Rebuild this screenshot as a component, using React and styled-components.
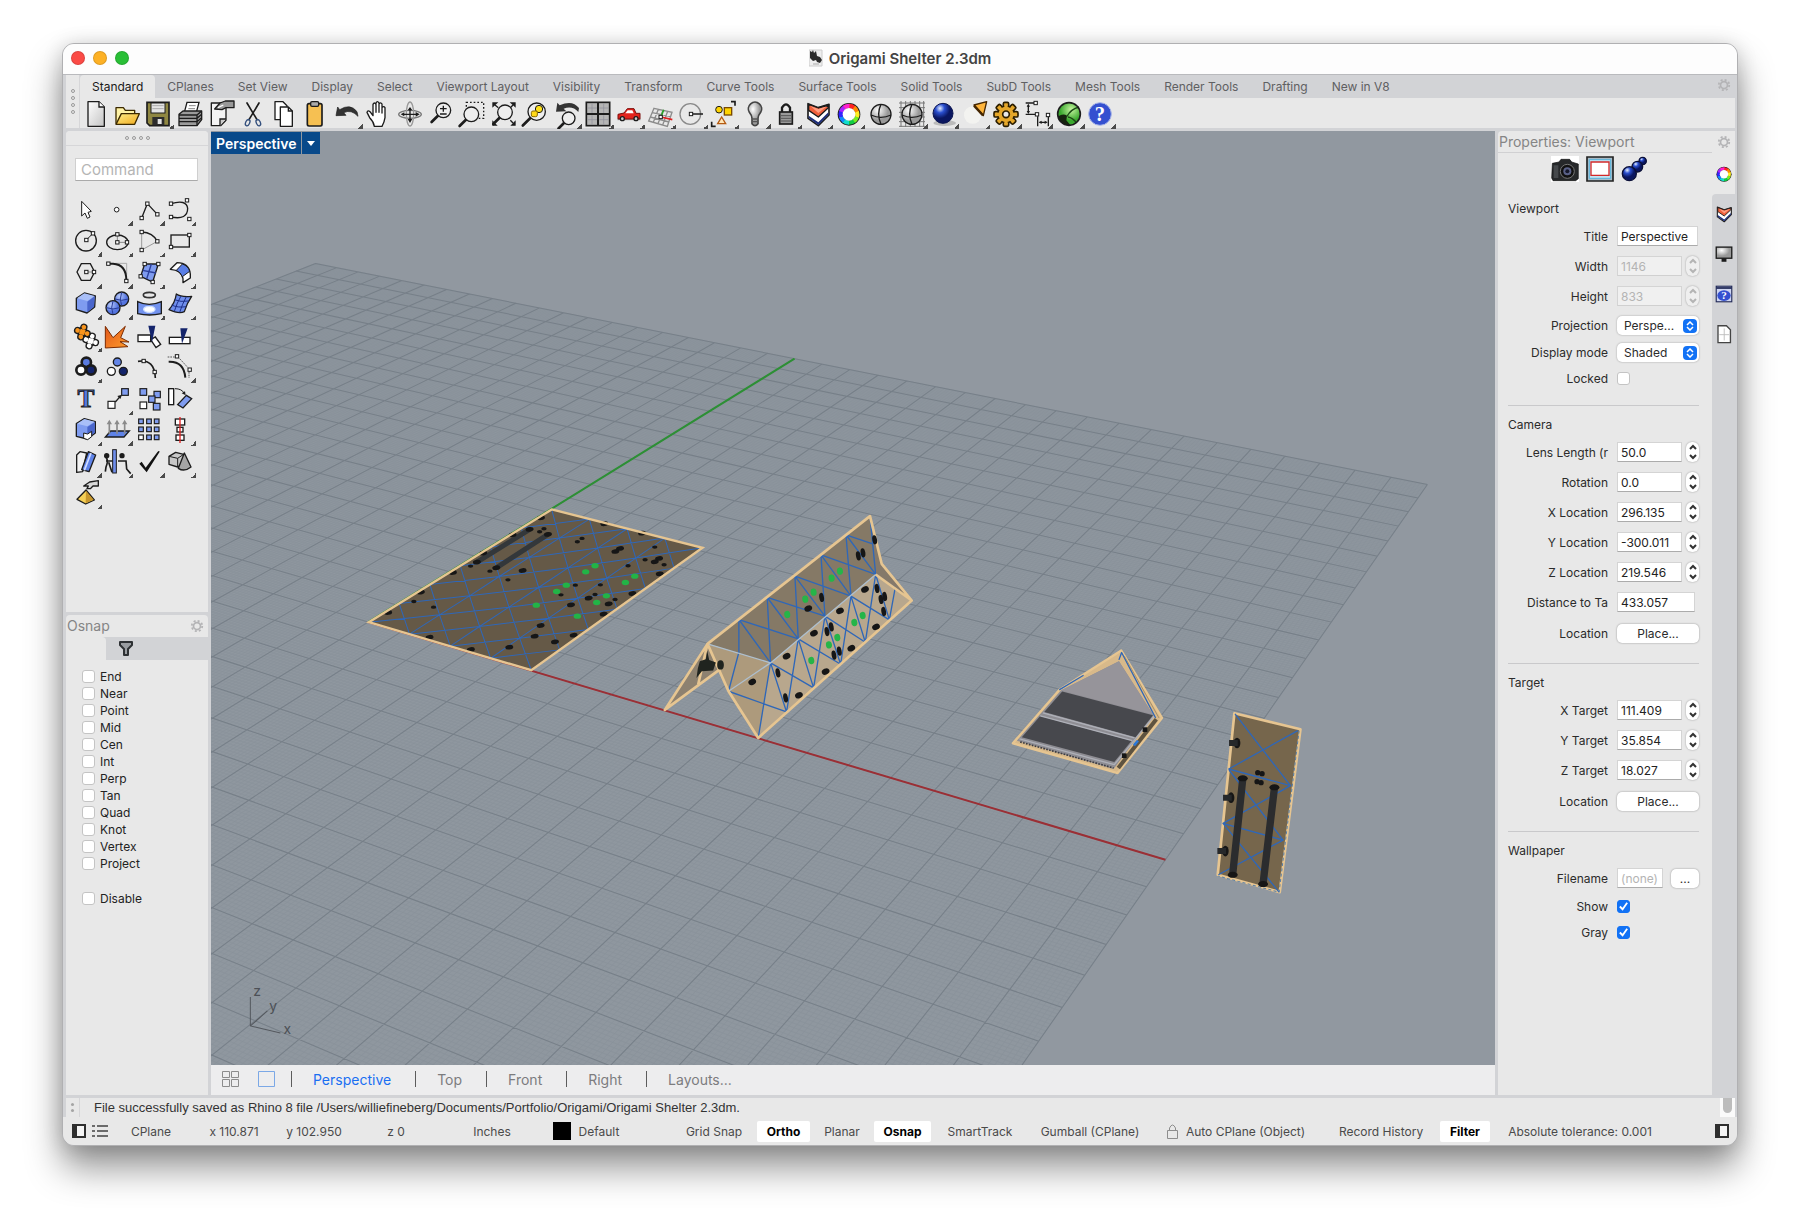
import { useId } from "react";
// Styles
import styled, { createGlobalStyle } from "styled-components";

// Constants
const BLUE = "#7f9cf0";
const NAVY = "#14246b";
const CREASE = "#2f67b8";
const INK = "#1c1c1c";

const TABS = [
  "Standard",
  "CPlanes",
  "Set View",
  "Display",
  "Select",
  "Viewport Layout",
  "Visibility",
  "Transform",
  "Curve Tools",
  "Surface Tools",
  "Solid Tools",
  "SubD Tools",
  "Mesh Tools",
  "Render Tools",
  "Drafting",
  "New in V8",
];

const OSNAPS = [
  "End",
  "Near",
  "Point",
  "Mid",
  "Cen",
  "Int",
  "Perp",
  "Tan",
  "Quad",
  "Knot",
  "Vertex",
  "Project",
];

const VIEW_TABS = ["Perspective", "Top", "Front", "Right", "Layouts..."];

/* ---------- icon parts, all drawn on a 90 x 90 canvas ---------- */

const Node = ({ x, y }) => (
  <rect x={x - 5} y={y - 5} width='10' height='10' fill='#fff' stroke={INK} strokeWidth='3' />
);

const Box = ({ x, y, s = 17, fill = BLUE }) => (
  <rect x={x} y={y} width={s} height={s} fill={fill} stroke={INK} strokeWidth='3.5' />
);

const Ball = ({ x, y, r, fill, w = 4 }) => (
  <circle cx={x} cy={y} r={r} fill={fill} stroke={INK} strokeWidth={w} />
);

const Sheet = ({ d = "M21 8h33l16 16v58H21Z", fill = "#f4f4f4" }) => (
  <path d={d} fill={fill} stroke={INK} strokeWidth='4' strokeLinejoin='round' />
);

const Lens = ({ x = 52, y = 40, r = 22, fill = "#eee" }) => (
  <>
    <path d={`M${x - r * 0.7} ${y + r * 0.7}L${x - r * 1.6} ${y + r * 1.6}`} stroke={INK} strokeWidth='8' strokeLinecap='round' />
    <circle cx={x} cy={y} r={r} fill={fill} stroke={INK} strokeWidth='4' />
  </>
);

const Layers = () => (
  <>
    <path d='M15 14L46 26 78 16V48L46 80 15 58Z' fill='#fff' stroke={INK} strokeWidth='5' strokeLinejoin='round' />
    <path d='M17 50L46 70 76 40V48L46 78 17 57Z' fill='#1d2d78' />
    <path d='M17 16L46 27 76 18V26L46 54 17 34Z' fill='#f0603c' stroke={INK} strokeWidth='4' strokeLinejoin='round' />
    <path d='M22 21l24 9 26-8-26 20Z' fill='#ff9d80' />
  </>
);

const JigsawPiece = ({ x, y, fill }) =>
  [11, 7].map((r) => (
    <g key={r} fill={r === 11 ? INK : fill} transform={`rotate(18 ${x} ${y})`}>
      <circle cx={x - 15} cy={y} r={r} />
      <circle cx={x + 15} cy={y} r={r} />
      <circle cx={x} cy={y - 15} r={r} />
      <circle cx={x} cy={y + 15} r={r} />
      <rect x={x - r - 1} y={y - r - 1} width={r * 2 + 2} height={r * 2 + 2} />
    </g>
  ));

const wheel = ["#f22", "#f80", "#fe2", "#7e2", "#1c4", "#1dc", "#18f", "#32f", "#a2f", "#f2c"];

const ColorWheel = () => (
  <>
    <circle cx='45' cy='46' r='34' fill={INK} />
    {wheel.map((color, i) => (
      <circle
        key={color}
        cx='45'
        cy='46'
        r='25'
        fill='none'
        stroke={color}
        strokeWidth='13'
        strokeDasharray='17 141'
        transform={`rotate(${i * 36 - 90} 45 46)`}
      />
    ))}
    <circle cx='45' cy='46' r='19' fill='#fff' />
  </>
);

const Cog = ({ fill, line }) => (
  <>
    {[0, 45, 90, 135, 180, 225, 270, 315].map((a) => (
      <rect key={a} x='37' y='10' width='16' height='22' rx='4' fill={fill} stroke={line} strokeWidth='5' transform={`rotate(${a} 45 46)`} />
    ))}
    <circle cx='45' cy='46' r='25' fill={fill} stroke={line} strokeWidth='4' />
    {[0, 45, 90, 135, 180, 225, 270, 315].map((a) => (
      <rect key={a} x='40' y='17' width='10' height='12' fill={fill} transform={`rotate(${a} 45 46)`} />
    ))}
    <circle cx='45' cy='46' r='10' fill='#e8e8e8' stroke={line} strokeWidth='5' />
  </>
);

const WireSphere = () => (
  <>
    <circle cx='45' cy='46' r='30' fill='url(#gray)' stroke={INK} strokeWidth='4' />
    <path d='M45 16q-14 28 0 60M15 48q30 14 60 0' fill='none' stroke={INK} strokeWidth='4' />
  </>
);

const TOOLBAR = [
  { name: "New", art: <><Sheet fill='url(#page)' /><path d='M54 8v16h16' fill='#fff' stroke={INK} strokeWidth='4' /></> },
  {
    name: "Open",
    art: (
      <>
        <path d='M12 74V26h22l6 8h28v12' fill='#fff3a6' stroke='#3c2a00' strokeWidth='4' strokeLinejoin='round' />
        <path d='M12 76l16-32h54L68 76Z' fill='url(#gold)' stroke='#3c2a00' strokeWidth='4' strokeLinejoin='round' />
      </>
    ),
  },
  {
    name: "Save",
    menu: true,
    art: (
      <>
        <path d='M12 10h66v70H20l-8-8Z' fill='#8f8742' stroke={INK} strokeWidth='5' />
        <rect x='24' y='12' width='42' height='30' fill='#e4e4e4' stroke={INK} strokeWidth='3' />
        <path d='M28 20h34M28 29h34' stroke='#aaa' strokeWidth='3' />
        <rect x='28' y='54' width='36' height='25' fill='#2c2c2c' />
        <rect x='44' y='60' width='12' height='15' fill='#e6e6e6' />
      </>
    ),
  },
  {
    name: "Print",
    art: (
      <>
        <path d='M28 40L36 10h36l-8 30Z' fill='#fff' stroke={INK} strokeWidth='4' />
        <path d='M42 20h20M40 29h20' stroke='#888' strokeWidth='3' />
        <path d='M12 46l12-10h56v26L66 80H12Z' fill='#9b9b9b' stroke={INK} strokeWidth='4' strokeLinejoin='round' />
        <path d='M12 48h54v32M66 48l14-12M12 58h54l14-12M12 68h54l14-12' fill='none' stroke={INK} strokeWidth='4' />
      </>
    ),
  },
  {
    name: "Document Properties",
    art: (
      <>
        <Sheet d='M16 12h44v52L44 80H16Z' />
        <path d='M60 60H42v20' fill='#ccc' stroke={INK} strokeWidth='4' />
        <path d='M26 30l16-18 16-6h26v20H60l-12 6Z' fill='#999' stroke={INK} strokeWidth='4' strokeLinejoin='round' />
        <path d='M36 26l16-8' stroke='#fff' strokeWidth='4' />
      </>
    ),
  },
  {
    name: "Cut",
    art: (
      <>
        <path d='M27 12l30 50M63 12L33 62' stroke={INK} strokeWidth='5' strokeLinecap='round' />
        <ellipse cx='29' cy='71' rx='6' ry='10' transform='rotate(25 29 71)' fill='none' stroke='#34507e' strokeWidth='4' />
        <ellipse cx='61' cy='71' rx='6' ry='10' transform='rotate(-25 61 71)' fill='none' stroke='#34507e' strokeWidth='4' />
      </>
    ),
  },
  {
    name: "Copy",
    art: (
      <>
        <Sheet d='M18 8h24l12 12v42H18Z' fill='#fff' />
        <Sheet d='M34 24h24l12 12v46H34Z' fill='#fff' />
        <path d='M58 24v12h12' fill='none' stroke={INK} strokeWidth='4' />
      </>
    ),
  },
  {
    name: "Paste",
    art: (
      <>
        <rect x='22' y='14' width='44' height='67' rx='5' fill='#f6c052' stroke={INK} strokeWidth='5' />
        <rect x='32' y='8' width='24' height='14' rx='4' fill='#aaa' stroke={INK} strokeWidth='4' />
      </>
    ),
  },
  { name: "Undo", menu: true, art: <path d='M12 50l5-26 6 8q32-20 52 6l3 14q-20-22-43-11l7 8Z' fill='#333' stroke={INK} strokeWidth='2' /> },
  {
    name: "Pan",
    art: (
      <path
        d='M34 82q-2-14-14-26L12 40q2-8 9-2l9 12V16q4-8 9 0v24-28q4-8 9 0v28-25q5-7 9 0v27-16q5-6 9 0v30q-2 14-9 26Z'
        fill='#fff'
        stroke={INK}
        strokeWidth='4'
        strokeLinejoin='round'
      />
    ),
  },
  {
    name: "Rotate View",
    art: (
      <>
        <ellipse cx='45' cy='46' rx='34' ry='12' fill='none' stroke='#777' strokeWidth='4' />
        <ellipse cx='45' cy='45' rx='11' ry='36' fill='none' stroke='#999' strokeWidth='4' />
        <path d='M45 28v34M24 46h40' stroke={INK} strokeWidth='4' />
        <path d='M45 24l7 10H38ZM45 72l7-12H38ZM74 46L62 39v14ZM17 46l11-6v12Z' fill={INK} />
      </>
    ),
  },
  { name: "Zoom", art: <><Lens y={34} /><path d='M42 29h20M52 20v18M42 45h20' stroke={INK} strokeWidth='4' /></> },
  {
    name: "Zoom Window",
    art: (
      <>
        <rect x='28' y='10' width='52' height='48' fill='none' stroke={INK} strokeWidth='4' strokeDasharray='5 6' />
        <Lens x={43} y={46} />
      </>
    ),
  },
  {
    name: "Zoom Extents",
    art: (
      <>
        <path d='M10 10h18L10 26ZM80 10v16L62 10ZM80 80H64l16-16ZM10 80V64l16 16Z' fill={INK} />
        <path d='M18 18l10 8M72 18l-8 8M72 72l-8-8' stroke={INK} strokeWidth='4' />
        <Lens x={48} y={40} />
      </>
    ),
  },
  {
    name: "Zoom Selected",
    art: (
      <>
        <Lens x={50} y={38} r={26} />
        <Ball x={57} y={30} r={11} fill='#ffe11a' w={3} />
        <rect x='34' y='36' width='18' height='17' rx='5' fill='#ffd91a' stroke='#8a6a00' strokeWidth='3' />
      </>
    ),
  },
  {
    name: "Undo View",
    menu: true,
    art: (
      <>
        <Lens x={50} y={58} r={19} />
        <path d='M12 38l4-27 7 8q38-18 58 8l-2 12q-18-20-44-10l8 8Z' fill='#333' />
      </>
    ),
  },
  {
    name: "4 Viewports",
    menu: true,
    art: (
      <>
        <rect x='10' y='10' width='70' height='70' fill='#b5b5b5' stroke={INK} strokeWidth='5' />
        <path d='M45 10v70M10 45h70' stroke={INK} strokeWidth='6' />
        <path d='M27 14v28M14 27h28M62 14v28M49 27h28M27 49v28M14 62h28M62 49v28M49 62h28' stroke='#8e8e9a' strokeWidth='2' />
      </>
    ),
  },
  {
    name: "Named Views",
    menu: true,
    art: (
      <>
        <path d='M10 62h70' stroke='#999' strokeWidth='3' />
        <path d='M12 46l18-4 10-13h20l6 14h12v17H12Z' fill='#e2231c' stroke='#7d0d0a' strokeWidth='3' strokeLinejoin='round' />
        <path d='M41 34h14l4 9H34Z' fill='#fff' />
        <Ball x={25} y={59} r={6} fill='#ccc' />
        <Ball x={66} y={59} r={6} fill='#ccc' />
      </>
    ),
  },
  {
    name: "Set CPlane",
    menu: true,
    art: (
      <>
        <path d='M24 28l54 12-14 42L8 66ZM37 31L22 70M51 34L36 74M65 37L50 78M19 41l55 12M13 54l56 15' fill='none' stroke='#8c8c8c' strokeWidth='4' />
        <path d='M45 54l34 8' stroke='#e02020' strokeWidth='5' />
        <path d='M45 54l8-22' stroke='#27a327' strokeWidth='5' />
        <Node x={44} y={54} />
      </>
    ),
  },
  {
    name: "Object Snap",
    menu: true,
    art: (
      <>
        <circle cx='40' cy='45' r='31' fill='none' stroke='#8a8a8a' strokeWidth='4' />
        <path d='M42 45h36' stroke={INK} strokeWidth='4' />
        <Node x={42} y={45} />
      </>
    ),
  },
  {
    name: "Select Objects",
    menu: true,
    art: (
      <>
        <Ball x={30} y={32} r={10} fill='#ffd400' w={3} />
        <rect x='46' y='26' width='22' height='22' fill='#ffd400' stroke='#7a4a00' strokeWidth='4' />
        <path d='M38 54l12 20H26Z' fill='#ffe6b8' stroke='#b55a10' strokeWidth='4' />
        <path d='M66 8h12v12M8 68v14h12' fill='none' stroke={INK} strokeWidth='5' />
      </>
    ),
  },
  {
    name: "Hide Objects",
    menu: true,
    art: (
      <>
        <path d='M36 58q0-8-8-18a20 20 0 1 1 34 0q-8 10-8 18v16q-9 12-18 0Z' fill='url(#gray)' stroke='#444' strokeWidth='5' />
        <path d='M37 60h16M37 68h16' stroke='#555' strokeWidth='4' />
      </>
    ),
  },
  {
    name: "Lock Objects",
    menu: true,
    art: (
      <>
        <path d='M33 40V26q12-20 24 0v14' fill='none' stroke={INK} strokeWidth='7' />
        <rect x='26' y='39' width='38' height='36' fill='#999' stroke={INK} strokeWidth='5' />
        <path d='M30 50h30M30 58h30M30 66h30' stroke='#555' strokeWidth='3' />
      </>
    ),
  },
  { name: "Edit Layers", menu: true, art: <Layers /> },
  { name: "Properties", menu: true, art: <ColorWheel /> },
  { name: "Wireframe", art: <WireSphere /> },
  {
    name: "Shade",
    menu: true,
    art: (
      <>
        <path d='M12 6v78M26 6v78M40 6v78M54 6v78M68 6v78M80 6v78M6 12h78M6 26h78M6 40h78M6 54h78M6 68h78M6 82h78' stroke='#777' strokeWidth='3' />
        <WireSphere />
      </>
    ),
  },
  {
    name: "Render",
    menu: true,
    art: (
      <>
        <ellipse cx='50' cy='72' rx='34' ry='9' fill='#bbb' />
        <circle cx='45' cy='43' r='30' fill='url(#blue)' stroke='#0b1550' strokeWidth='3' />
      </>
    ),
  },
  {
    name: "Spotlight",
    menu: true,
    art: (
      <>
        <ellipse cx='38' cy='48' rx='26' ry='26' fill='#f8f8f4' opacity='.7' />
        <path d='M42 18L80 8 70 50Z' fill='#ffb53c' stroke='#452600' strokeWidth='4' strokeLinejoin='round' />
        <path d='M42 20l27 29' stroke='#452600' strokeWidth='7' />
      </>
    ),
  },
  { name: "Options", menu: true, art: <Cog fill='#e5a72b' line='#2c1e00' /> },
  {
    name: "Dimensions",
    menu: true,
    art: (
      <>
        <path d='M8 12h30M8 46h30M16 18v22M44 52v30M76 48v34M50 70h20' stroke={INK} strokeWidth='4' fill='none' />
        <path d='M16 14l5 9H11ZM16 45l5-9H11ZM47 70l9-5v10ZM74 70l-9-5v10Z' fill={INK} />
        <Node x={38} y={12} />
        <Node x={42} y={46} />
        <Node x={75} y={48} />
      </>
    ),
  },
  {
    name: "Grasshopper",
    menu: true,
    art: (
      <>
        <circle cx='45' cy='45' r='33' fill='url(#green)' />
        <path d='M13 52q14-10 26-2l-2 14 12 14q-14 4-26-6-8-8-10-20Z' fill='#16240f' />
        <path d='M39 52q12-22 36-28M42 54q14 2 26 18' fill='none' stroke='#1c4a16' strokeWidth='4' />
        <circle cx='45' cy='45' r='34' fill='none' stroke={INK} strokeWidth='5' />
      </>
    ),
  },
  {
    name: "Help",
    menu: true,
    art: (
      <>
        <circle cx='45' cy='45' r='34' fill='#3450d0' stroke='#a9b6e8' strokeWidth='3' />
        <text x='45' y='66' fontSize='62' fontWeight='700' fontFamily='Liberation Serif, serif' textAnchor='middle' fill='#fff'>
          ?
        </text>
      </>
    ),
  },
];

const TOOLS = [
  { name: "Select", art: <path d='M32 19v44l10-9 7 16 8-4-6-14 10-3Z' fill='#fff' stroke={INK} strokeWidth='3' strokeLinejoin='round' /> },
  { name: "Point", menu: true, art: <Ball x={44} y={44} r={7} fill='#fff' w={3} /> },
  {
    name: "Polyline",
    menu: true,
    art: <><path d='M23 69L40 26l30 32' fill='none' stroke={INK} strokeWidth='4' /><Node x={23} y={69} /><Node x={40} y={26} /><Node x={70} y={58} /></>,
  },
  {
    name: "Curve",
    menu: true,
    art: (
      <>
        <path d='M18 26q46-14 50 14 0 36-50 26' fill='none' stroke={INK} strokeWidth='4' />
        <Node x={18} y={26} /><Node x={66} y={16} /><Node x={18} y={66} /><Node x={73} y={72} />
      </>
    ),
  },
  {
    name: "Circle",
    menu: true,
    art: <><circle cx='45' cy='44' r='31' fill='none' stroke={INK} strokeWidth='4' /><path d='M46 42l20-20' stroke={INK} strokeWidth='3' /><Node x={46} y={42} /><Node x={66} y={22} /></>,
  },
  {
    name: "Ellipse",
    menu: true,
    art: (
      <>
        <ellipse cx='46' cy='49' rx='32' ry='22' fill='none' stroke={INK} strokeWidth='4' />
        <path d='M46 25v24h29' fill='none' stroke='#888' strokeWidth='3' />
        <Node x={46} y={25} /><Node x={46} y={49} /><Node x={75} y={49} />
      </>
    ),
  },
  {
    name: "Arc",
    menu: true,
    art: (
      <>
        <path d='M70 46L23 72V18' fill='none' stroke='#999' strokeWidth='3' />
        <path d='M23 18q34 2 47 28' fill='none' stroke={INK} strokeWidth='4' />
        <Node x={23} y={18} /><Node x={70} y={46} /><Node x={23} y={72} />
      </>
    ),
  },
  { name: "Rectangle", menu: true, art: <><rect x='18' y='27' width='55' height='36' fill='none' stroke={INK} strokeWidth='4' /><Node x={18} y={63} /><Node x={73} y={27} /></> },
  { name: "Polygon", menu: true, art: <><path d='M18 42l13-25h27l13 25-13 25H31Z' fill='none' stroke={INK} strokeWidth='4' /><path d='M46 42h23' stroke='#888' strokeWidth='3' /><Node x={46} y={42} /><Node x={69} y={42} /></> },
  {
    name: "Fillet",
    menu: true,
    art: (
      <>
        <path d='M40 16h34v34' fill='none' stroke='#aaa' strokeWidth='3' />
        <path d='M19 17h14q40 2 40 50' fill='none' stroke={INK} strokeWidth='6' />
        <Node x={19} y={17} /><Node x={73} y={69} />
      </>
    ),
  },
  {
    name: "Surface",
    menu: true,
    art: (
      <>
        <path d='M32 18h41L56 72 20 55Z' fill={BLUE} stroke={INK} strokeWidth='4' />
        <path d='M52 18L38 63M26 37l40 8' stroke='#2b3f9c' strokeWidth='4' />
        <Node x={32} y={18} /><Node x={73} y={18} /><Node x={20} y={55} /><Node x={56} y={72} />
      </>
    ),
  },
  {
    name: "Sweep",
    menu: true,
    art: (
      <>
        <path d='M16 34l20-20q36 0 40 34v12L54 74V62Q50 36 16 34Z' fill='#fff' stroke={INK} strokeWidth='4' strokeLinejoin='round' />
        <path d='M34 37l18-19q18 6 22 22L52 56Q46 42 34 37Z' fill='#5b7fe6' stroke={INK} strokeWidth='3' />
      </>
    ),
  },
  {
    name: "Box",
    menu: true,
    art: (
      <>
        <path d='M16 28l24-16 33 9-2 33-23 18-32-10Z' fill={BLUE} stroke={INK} strokeWidth='4' strokeLinejoin='round' />
        <path d='M18 28l31 8 22-15-31-8Z' fill='#a9bff8' />
        <path d='M49 38v32l20-17 2-31Z' fill='#4a66cc' />
      </>
    ),
  },
  {
    name: "Boolean",
    menu: true,
    art: (
      <>
        <Ball x={59} y={30} r={21} fill='url(#sky)' />
        <path d='M59 10q-8 20 0 40M39 30q20 8 40 0' fill='none' stroke='#2a3e98' strokeWidth='3' />
        <Ball x={33} y={56} r={21} fill='url(#sky)' />
        <path d='M33 36q-8 20 0 40M13 56q20 8 40 0' fill='none' stroke='#2a3e98' strokeWidth='3' />
      </>
    ),
  },
  {
    name: "Project",
    menu: true,
    art: (
      <>
        <ellipse cx='46' cy='18' rx='18' ry='8' fill='none' stroke='#333' strokeWidth='5' />
        <path d='M11 38q34 16 71 0v36q-36 8-71 0Z' fill='#7292ee' stroke={INK} strokeWidth='4' />
        <ellipse cx='46' cy='61' rx='17' ry='9' fill='#fff' stroke='#cfe0ff' strokeWidth='4' />
      </>
    ),
  },
  {
    name: "Patch",
    menu: true,
    art: (
      <>
        <path d='M34 15q14 10 46 7-14 20-22 46-16 8-46-6 18-20 22-47Z' fill='#6f8eec' stroke={INK} strokeWidth='4' strokeLinejoin='round' />
        <path d='M28 32q18 8 44 4M20 48q18 9 44 5M48 21q-12 20-20 46M64 23q-12 22-20 47' fill='none' stroke='#1d2f8a' strokeWidth='3' />
      </>
    ),
  },
  {
    name: "Join",
    menu: true,
    art: (
      <>
        <JigsawPiece x={59} y={60} fill='#fff' />
        <JigsawPiece x={34} y={33} fill='#f7941d' />
      </>
    ),
  },
  { name: "Explode", art: <path d='M10 16l23 34 37-34-14 34 25 13-27-1 24 15-68 4Z' fill='url(#fire)' stroke='#7a2a00' strokeWidth='3' strokeLinejoin='round' /> },
  {
    name: "Trim",
    art: (
      <>
        <path d='M12 42h38v20H12ZM50 56l14-8 16 22-14 10Z' fill='#fff' stroke={INK} strokeWidth='4' />
        <path d='M43 14h21L54 64Z' fill={NAVY} />
      </>
    ),
  },
  { name: "Split", art: <><rect x='13' y='49' width='62' height='19' fill='#fff' stroke={INK} strokeWidth='4' /><path d='M46 22h22L51 68Z' fill={NAVY} /></> },
  {
    name: "Group",
    menu: true,
    art: (
      <g stroke={INK} strokeWidth='8'>
        <circle cx='46' cy='31' r='14' fill='#5a7be0' />
        <circle cx='60' cy='54' r='14' fill={NAVY} />
        <circle cx='30' cy='54' r='14' fill='#fff' />
      </g>
    ),
  },
  { name: "Ungroup", art: <><Ball x={46} y={30} r={12} fill='#6385e6' /><Ball x={28} y={58} r={12} fill='#fff' /><Ball x={64} y={58} r={12} fill={NAVY} /></> },
  { name: "Edit Points", art: <><path d='M12 28q50-8 52 50' fill='none' stroke={INK} strokeWidth='5' /><Node x={29} y={27} /><Node x={62} y={60} /></> },
  {
    name: "Control Points",
    menu: true,
    art: (
      <>
        <path d='M8 15h24M44 20l24 26M72 60v18' fill='none' stroke='#555' strokeWidth='3' strokeDasharray='5 3' />
        <path d='M11 29q46-2 50 48' fill='none' stroke={INK} strokeWidth='6' />
        <Node x={36} y={13} /><Node x={74} y={53} />
      </>
    ),
  },
  {
    name: "Text",
    art: (
      <text x='45' y='70' fontSize='76' fontWeight='700' fontFamily='Liberation Serif, serif' textAnchor='middle' fill='#5579dd' stroke={INK} strokeWidth='3'>
        T
      </text>
    ),
  },
  { name: "Move", menu: true, art: <><path d='M40 54l14-16' stroke={INK} strokeWidth='4' /><path d='M60 32l-14 4 9 9Z' fill={INK} /><Box x={18} y={52} s={21} fill='#fff' /><Box x={59} y={14} s={20} /></> },
  { name: "Copy Objects", art: <><Box x={18} y={14} s={20} /><Box x={18} y={54} s={20} fill='#fff' /><Box x={60} y={22} s={19} /><Box x={44} y={36} s={19} /><Box x={58} y={58} s={20} /></> },
  {
    name: "Rotate",
    art: (
      <>
        <rect x='11' y='14' width='15' height='48' fill='#fff' stroke={INK} strokeWidth='4' />
        <path d='M30 14q20 0 28 14' fill='none' stroke={INK} strokeWidth='3' />
        <path d='M62 34l-12-6 10-6Z' fill={INK} />
        <path d='M64 34l16 10-26 28-16-10Z' fill={BLUE} stroke={INK} strokeWidth='4' />
      </>
    ),
  },
  {
    name: "Solid Edit",
    menu: true,
    art: (
      <>
        <path d='M16 26l24-15 33 9v34L49 72l-33-8Z' fill={BLUE} stroke={INK} strokeWidth='4' strokeLinejoin='round' />
        <path d='M18 26l31 8 22-14-31-8Z' fill='#a9bff8' />
        <path d='M49 36v34l22-17V22Z' fill='#4a66cc' />
        <path d='M38 54l12 3 12-8v16L50 74l-12-4Z' fill='#fff' stroke={INK} strokeWidth='3' />
      </>
    ),
  },
  {
    name: "Extrude",
    menu: true,
    art: (
      <>
        <path d='M26 48h56L66 66H10Z' fill='#5f83e8' stroke={INK} strokeWidth='4' />
        <path d='M22 56V26M45 56V26M68 56V26' stroke='#8a8a8a' strokeWidth='5' />
        <path d='M22 14l8 14H14ZM45 14l8 14H37ZM68 14l8 14H60Z' fill='#8a8a8a' />
      </>
    ),
  },
  {
    name: "Array",
    art: [12, 36, 60].map((y) => [14, 38, 61].map((x) => <Box key={`${x}-${y}`} x={x} y={y} s={14} fill={x === 14 && y === 60 ? "#fff" : BLUE} />)),
  },
  {
    name: "Align",
    menu: true,
    art: (
      <>
        <rect x='31' y='12' width='28' height='18' fill='#fff' stroke={INK} strokeWidth='4' />
        <rect x='36' y='37' width='18' height='14' fill='#fff' stroke={INK} strokeWidth='4' />
        <rect x='33' y='60' width='24' height='16' fill='#fff' stroke={INK} strokeWidth='4' />
        <path d='M45 6v78' stroke='#e02020' strokeWidth='4' />
      </>
    ),
  },
  {
    name: "Unroll",
    menu: true,
    art: (
      <>
        <path d='M17 24l10-10 20 4-12 56-18 2Z' fill='#f2f2f2' stroke={INK} strokeWidth='4' strokeLinejoin='round' />
        <path d='M52 14l22 10-20 50-22-6Z' fill='#5f83e8' stroke={INK} strokeWidth='4' strokeLinejoin='round' />
        <path d='M60 18l-20 52' stroke='#cfdcff' strokeWidth='5' />
      </>
    ),
  },
  {
    name: "Flow",
    menu: true,
    art: (
      <>
        <path d='M12 30q8 12 0 30l-2 14M12 42h28M48 42h24l2 24 12 14M20 46l10 30' fill='none' stroke={INK} strokeWidth='5' />
        <circle cx='14' cy='26' r='8' fill={INK} />
        <circle cx='60' cy='26' r='8' fill={INK} />
        <rect x='32' y='8' width='11' height='70' fill='#6f8eec' stroke={INK} strokeWidth='3' />
      </>
    ),
  },
  { name: "Check", menu: true, art: <path d='M16 50l7-6 12 18 36-48q4-4 6 0L38 76Z' fill='#111' /> },
  {
    name: "Primitives",
    menu: true,
    art: (
      <>
        <path d='M12 28l20-12 24 6v26L38 60 12 52Z' fill='#c8c8c8' stroke={INK} strokeWidth='4' strokeLinejoin='round' />
        <path d='M12 28l26 6 18-12M38 34v26' fill='none' stroke={INK} strokeWidth='3' />
        <path d='M58 18L40 64q18 12 38-4Z' fill='#a5a5a5' stroke={INK} strokeWidth='4' strokeLinejoin='round' />
      </>
    ),
  },
  {
    name: "Pyramid",
    menu: true,
    art: (
      <>
        <path d='M38 24l18-12 26-4v16H66l-8 8H48l4-8Z' fill='#d8d8d8' stroke={INK} strokeWidth='4' strokeLinejoin='round' />
        <path d='M45 36L18 64l26 14 26-12Z' fill='#f5cf55' stroke={INK} strokeWidth='4' strokeLinejoin='round' />
        <path d='M45 38l-1 38 24-11Z' fill='#c7962c' />
      </>
    ),
  },
];

const SIDE_TABS = [
  { name: "Layers", art: <Layers /> },
  {
    name: "Display",
    art: (
      <>
        <rect x='10' y='14' width='70' height='50' fill='url(#gray)' stroke={INK} strokeWidth='6' />
        <path d='M34 64h22v16H34Z' fill={INK} />
      </>
    ),
  },
  {
    name: "Help",
    art: (
      <>
        <rect x='10' y='10' width='70' height='70' fill='#cfd6f2' stroke='#222a58' strokeWidth='5' />
        <path d='M10 14h70v8H10Z' fill='#222a58' />
        <ellipse cx='45' cy='52' rx='30' ry='24' fill='#3450d0' />
        <text x='45' y='69' fontSize='50' fontWeight='700' fontFamily='Liberation Serif, serif' textAnchor='middle' fill='#fff'>
          ?
        </text>
      </>
    ),
  },
  { name: "Page", art: <><path d='M18 8h38l18 18v58H18Z' fill='#fff' stroke='#444' strokeWidth='6' /><path d='M46 20v54M24 48h44' stroke='#bbb' strokeWidth='4' /></> },
];

/* ---------- camera: world units to viewport pixels ---------- */

const CAMERA = [296.135, -300.011, 219.546];
const FOCAL = 1944;

const project = (x, y) => {
  const [dx, dy, dz] = [x - CAMERA[0], y - CAMERA[1], -CAMERA[2]];
  const depth = -0.42656 * dx + 0.77556 * dy - 0.46534 * dz;
  const right = 0.87621 * dx + 0.48192 * dy;
  const up = -0.22426 * dx + 0.40773 * dy + 0.88512 * dz;
  return [642 + (FOCAL * right) / depth, 467 - (FOCAL * up) / depth].map((n) => n.toFixed(1));
};

const gridPath = (step) => {
  let d = "";
  for (let i = -200; i <= 200; i += step) {
    d += `M${project(i, -200)}L${project(i, 200)}M${project(-200, i)}L${project(200, i)}`;
  }
  return d;
};

const MAJOR_GRID = gridPath(10);
const MINOR_GRID = gridPath(1);
const GRID_AREA = `M${project(-200, -200)}L${project(200, -200)}L${project(200, 200)}L${project(-200, 200)}Z`;

// crease nodes of the flat pattern: 4 cells across, 6 cells down
const flatNode = (u, v) => {
  const s = u / 4;
  const t = v / 6;
  const x = 606 + 452 * s - 548 * t + 35 * s * t;
  const y = 87 + 115 * s + 338 * t + 29 * s * t;
  return `${Math.round(x)} ${Math.round(y)}`;
};

const flatCreases = () => {
  let d = "";
  for (let u = 0; u < 4; u++) {
    for (let v = 0; v < 6; v++) {
      d += `M${flatNode(u, v)}L${flatNode(u + 1, v + 1)}M${flatNode(u + 1, v)}L${flatNode(u, v + 1)}`;
      if (u > 0) d += `M${flatNode(u, v)}L${flatNode(u, v + 1)}`;
    }
  }
  return d;
};

const FLAT_HOLES = [
  [574, 112], [489, 163], [401, 218], [310, 276], [214, 335], [116, 396], [764, 130], [877, 158], [540, 147], [595, 162],
  [382, 245], [440, 262], [519, 270], [811, 204], [797, 213], [928, 234], [915, 244], [930, 280], [848, 339], [762, 401],
  [672, 464], [717, 353], [777, 370], [664, 373], [573, 435], [555, 467], [616, 484], [479, 500], [240, 470], [364, 507],
];
const FLAT_MARKS = [
  [583, 145], [570, 154], [697, 174], [683, 184], [915, 200], [886, 238], [943, 253], [835, 256], [752, 313], [736, 342],
  [796, 357], [634, 343], [475, 298], [421, 272], [363, 257], [193, 363], [252, 380], [677, 314],
];
const FLAT_LIGHTS = [
  [736, 256], [708, 274], [650, 314], [621, 333], [855, 287], [827, 306], [770, 346], [741, 366], [560, 374], [683, 407],
];
const TENT_HOLES = [
  [307, 544], [410, 467], [447, 584], [527, 513], [492, 398], [570, 331], [604, 443], [645, 267], [678, 379], [475, 324],
];
const TENT_SLOTS = [
  [384, 517], [407, 592], [515, 291], [531, 393], [544, 379], [552, 464], [568, 452], [625, 166], [639, 157], [681, 264],
  [693, 297], [704, 288], [701, 333], [674, 118],
];
const TENT_LIGHTS = [
  [412, 342], [466, 296], [491, 275], [545, 233], [570, 212], [484, 480], [537, 433], [562, 411], [613, 366], [638, 345],
];

const Dots = ({ points, rx, ry, turn = 0, fill = "#161616" }) =>
  points.map(([x, y]) => (
    <ellipse key={`${x}-${y}`} cx={x} cy={y} rx={rx} ry={ry} fill={fill} transform={`rotate(${turn} ${x} ${y})`} />
  ));

const FlatPattern = () => (
  <g transform='translate(139 349) scale(.3333)'>
    <path d='M606 87L1058 202 545 569 58 425Z' fill='#655947' />
    <path d={flatCreases()} fill='none' stroke={CREASE} strokeWidth='3' />
    <path d='M540 147L382 245M595 162L440 262' stroke='#33373a' strokeWidth='15' />
    <Dots points={FLAT_HOLES} rx={12} ry={7} turn={-8} />
    <Dots points={FLAT_MARKS} rx={8} ry={5} />
    <Dots points={FLAT_LIGHTS} rx={11} ry={8} fill='#22b446' />
    <path d='M606 87L1058 202 545 569 58 425Z' fill='none' stroke='#e6c591' strokeWidth='7' />
  </g>
);

const Tent = () => (
  <g transform='translate(439 369) scale(.3333)' strokeLinejoin='round'>
    <path d='M660 47L695 190 785 300 677 225Z' fill='#85796a' />
    <path d='M173 430L45 628 150 550 205 510Z' fill='#8d8170' />
    <path d='M173 430L660 47 677 222 362 487Z' fill='#857966' />
    <path d='M173 430L362 487 677 222 785 300 325 712 236 572Z' fill='#b8a78d' />
    <path d='M173 430L362 487 325 712 205 510Z' fill='#ad9a7c' />
    <path
      d='M267 357V455L236 572M267 357L362 487 352 291 445 415 435 227 525 347 513 163 603 287 588 103 677 222M267 357L445 415M352 291L525 347M435 227L603 287M513 163L677 222M588 103L668 130M236 572L410 634 362 487 325 712M445 415L410 634M362 487L491 562 445 415M445 415L572 491 525 347 491 562M603 287L572 491M525 347L646 425 603 287 718 358 677 222 646 425M735 265L718 358M660 47L677 222 735 262'
      fill='none'
      stroke={CREASE}
      strokeWidth='4'
    />
    <path d='M173 430L362 487M236 572L362 487 677 222' fill='none' stroke='#aebfce' strokeWidth='4' />
    <path d='M173 430L660 47 695 190 785 300 325 712 236 572 173 430 45 628 205 510M785 300L677 222M173 430L145 552' fill='none' stroke='#e6c591' strokeWidth='8' />
    <path d='M150 482l18-6 4-26 6 28 20 8-8 24-34 2-16 20 4-28Z' fill='#20241f' />
    <ellipse cx='212' cy='493' rx='10' ry='14' fill='#20241f' />
    <Dots points={TENT_HOLES} rx={12} ry={9} turn={-25} />
    <Dots points={TENT_SLOTS} rx={7} ry={14} turn={-10} />
    <Dots points={TENT_LIGHTS} rx={9} ry={11} turn={-10} fill='#25b548' />
  </g>
);

const FoldedShelter = () => (
  <g transform='translate(779 499) scale(.3333)' strokeLinejoin='round'>
    <path d='M393 60L515 262 382 427 68 338 207 178Z' fill='#d8b98a' stroke='#e6c591' strokeWidth='7' />
    <path d='M386 92L490 255 370 415 80 330 212 180Z' fill='#8e8d93' />
    <path d='M386 92L488 252 212 180Z' fill='#96949a' />
    <path d='M216 183L488 254 436 320 162 244ZM150 256L424 330 372 394 95 320Z' fill='#47484d' />
    <path d='M158 247L432 322M150 256L426 330M88 325L372 402 490 258' fill='none' stroke='#aeb0b8' strokeWidth='4' />
    <path d='M90 334L370 412' stroke='#3c3c42' strokeWidth='5' strokeDasharray='5 4' />
    <path d='M498 266L384 412' stroke='#5e5340' strokeWidth='12' />
    <path d='M207 178L280 134M386 88L394 66 496 262' fill='none' stroke={CREASE} strokeWidth='4' />
    <path d='M443 330l-12 14' stroke='#2b78d8' strokeWidth='8' />
    <path d='M402 76L506 262' stroke='#8b7a5a' strokeWidth='2' />
    <rect x='457' y='290' width='14' height='14' fill='#161616' />
    <rect x='395' y='368' width='14' height='14' fill='#161616' />
  </g>
);

const DoorPanel = () => (
  <g transform='translate(779 499) scale(.3333)' strokeLinejoin='round'>
    <path d='M732 248L930 296 868 784 682 732Z' fill='#76664c' stroke='#e6c591' strokeWidth='8' />
    <path d='M734 250L900 465 715 415 922 300M900 465L698 578 878 628 716 418M878 628L684 732M698 578L866 784' fill='none' stroke={CREASE} strokeWidth='4' />
    <path d='M926 300L866 784 684 736' fill='none' stroke='#567ea8' strokeWidth='3' strokeDasharray='9 7' />
    <path d='M757 445L727 730M852 472L818 758' stroke='#2b2c2e' strokeWidth='22' />
    <Dots points={[[757, 443], [852, 470], [727, 732], [818, 760]]} rx={15} ry={9} />
    <Dots points={[[802, 426], [815, 429], [800, 453], [812, 456]]} rx={8} ry={8} />
    <Dots points={[[740, 337], [722, 501], [705, 661]]} rx={10} ry={16} />
    <path d='M716 328h26v18h-26ZM698 492h26v18h-26ZM681 652h26v18h-26Z' fill='#26282a' />
  </g>
);

const Scene = () => (
  <SceneSvg viewBox='0 0 1284 933' preserveAspectRatio='xMidYMid slice' aria-label='Perspective view'>
    <path d={GRID_AREA} fill='#8f979f' />
    <path d={MINOR_GRID} stroke='#7a858e' strokeWidth='.5' opacity='.35' />
    <path d={MAJOR_GRID} stroke='#727b84' strokeWidth='1' opacity='.8' />
    <path d={`M${project(0, 0)}L${project(200, 0)}`} stroke='#9b2f35' strokeWidth='2' />
    <path d={`M${project(0, 0)}L${project(0, 200)}`} stroke='#2d8f35' strokeWidth='2' />
    <FlatPattern />
    <Tent />
    <FoldedShelter />
    <DoorPanel />
    <path d='M40 865V894L70 901M40 894L57 879' fill='none' stroke='#54585e' strokeWidth='1' />
    <g fill='#4c5056' fontSize='14' fontFamily='Inter, sans-serif'>
      <text x='43' y='864'>z</text>
      <text x='59' y='879'>y</text>
      <text x='73' y='902'>x</text>
    </g>
  </SceneSvg>
);

const Defs = () => (
  <HiddenSvg aria-hidden='true'>
    <defs>
      <linearGradient id='page' x2='1' y2='1'>
        <stop offset='0' stopColor='#fff' />
        <stop offset='1' stopColor='#c4c4c4' />
      </linearGradient>
      <linearGradient id='gold' x2='1' y2='1'>
        <stop offset='0' stopColor='#fff08a' />
        <stop offset='1' stopColor='#f0a91c' />
      </linearGradient>
      <linearGradient id='fire' x2='1' y2='1'>
        <stop offset='0' stopColor='#e2561b' />
        <stop offset='1' stopColor='#ff9d2a' />
      </linearGradient>
      <radialGradient id='gray' cx='.35' cy='.3'>
        <stop offset='0' stopColor='#fff' />
        <stop offset='1' stopColor='#999' />
      </radialGradient>
      <radialGradient id='sky' cx='.35' cy='.3'>
        <stop offset='0' stopColor='#b9cbfb' />
        <stop offset='1' stopColor='#5575e0' />
      </radialGradient>
      <radialGradient id='blue' cx='.35' cy='.25'>
        <stop offset='0' stopColor='#e6f0ff' />
        <stop offset='.45' stopColor='#2a4fd0' />
        <stop offset='1' stopColor='#0a1660' />
      </radialGradient>
      <radialGradient id='green' cx='.6' cy='.3'>
        <stop offset='0' stopColor='#c6f5a0' />
        <stop offset='1' stopColor='#3aa82e' />
      </radialGradient>
    </defs>
  </HiddenSvg>
);

const Gear = () => (
  <SmallIcon viewBox='0 0 16 16' aria-hidden='true'>
    <g fill='none' stroke='#b4b4b6'>
      <circle cx='8' cy='8' r='4' strokeWidth='2' />
      <circle cx='8' cy='8' r='6' strokeWidth='2' strokeDasharray='2.35 2.36' />
    </g>
  </SmallIcon>
);

const Tool = ({ tool }) => (
  <ToolButton type='button' aria-label={tool.name} $menu={tool.menu}>
    <ToolArt viewBox='0 0 90 90'>{tool.art}</ToolArt>
  </ToolButton>
);

const Stepper = ({ label, disabled }) => (
  <StepperBox $disabled={disabled}>
    {["up", "down"].map((way) => (
      <StepButton key={way} type='button' aria-label={`${label} ${way}`} disabled={disabled}>
        <svg width='8' height='6' viewBox='0 0 8 6' fill='none' stroke='currentColor' strokeWidth='2'>
          <path d={way === "up" ? "M1 5l3-3 3 3" : "M1 1l3 3 3-3"} />
        </svg>
      </StepButton>
    ))}
  </StepperBox>
);

const Field = ({ label, value, disabled, stepper = true, width = 65 }) => {
  const id = useId();

  return (
    <Row>
      <RowLabel htmlFor={id}>{label}</RowLabel>
      <TextInput id={id} defaultValue={value} disabled={disabled} $width={width} />
      {stepper ? <Stepper label={label} disabled={disabled} /> : null}
    </Row>
  );
};

const SelectField = ({ label, value, height }) => {
  const id = useId();

  return (
    <Row $height={height}>
      <RowLabel htmlFor={id}>{label}</RowLabel>
      <SelectBox>
        <Select id={id}>
          <option>{value}</option>
        </Select>
        <SelectBadge>
          <svg width='8' height='10' viewBox='0 0 8 10' fill='none' stroke='#fff' strokeWidth='1.5'>
            <path d='M1 4l3-3 3 3M1 6l3 3 3-3' />
          </svg>
        </SelectBadge>
      </SelectBox>
    </Row>
  );
};

const CheckField = ({ label, checked }) => {
  const id = useId();

  return (
    <Row $height={26}>
      <RowLabel htmlFor={id}>{label}</RowLabel>
      <Check id={id} type='checkbox' defaultChecked={checked} />
    </Row>
  );
};

const PlaceField = () => (
  <Row $height={32}>
    <RowLabel as='span'>Location</RowLabel>
    <PushButton type='button' $width={82}>
      Place...
    </PushButton>
  </Row>
);

const OsnapOption = ({ label }) => (
  <OsnapLabel>
    <Check type='checkbox' />
    {label}
  </OsnapLabel>
);

const PaneIcon = () => (
  <svg width='14' height='14' viewBox='0 0 14 14' aria-hidden='true'>
    <path d='M1 1h12v12H1Z' fill='#f4f4f4' stroke='#2e2e2e' strokeWidth='2' />
    <path d='M3.500 2v10' stroke='#2e2e2e' strokeWidth='3' />
  </svg>
);

const PropertiesPanel = () => (
  <Properties>
    <PanelBody>
      <PanelHeader $line>Properties: Viewport</PanelHeader>
      <PageIcons>
        <PageButton type='button' aria-label='Camera'>
          <svg width='28' height='26' viewBox='0 0 84 78'>
            <path d='M0 0h84v78H0Z' fill='#fff' />
            <path d='M4 22l20-4 6-8h26l6 8 20 6v44l-8 6H6l-4-8Z' fill='#26282a' stroke='#111' strokeWidth='2' />
            <path d='M8 28h14v38H8Z' fill='#45484b' />
            <circle cx='49' cy='46' r='21' fill='#111' stroke='#777' strokeWidth='3' />
            <circle cx='49' cy='46' r='12' fill='#5a6188' />
            <circle cx='49' cy='46' r='6' fill='#16192c' />
          </svg>
        </PageButton>
        <PageButton type='button' aria-label='Viewport'>
          <svg width='28' height='26' viewBox='0 0 84 78'>
            <path d='M3 3h78v72H3Z' fill='#a8bcc8' stroke='#222' strokeWidth='5' />
            <path d='M10 11h64v56H10Z' fill='#c4e4f2' stroke='#57b4dc' strokeWidth='3' />
            <path d='M15 18h54v40H15Z' fill='#fff' stroke='#d22a2a' strokeWidth='4' />
          </svg>
        </PageButton>
        <PageButton type='button' aria-label='Material'>
          <svg width='26' height='26' viewBox='0 0 78 78'>
            <g fill='url(#blue)' stroke='#0b1038' strokeWidth='4'>
              <circle cx='65' cy='15' r='11' />
              <circle cx='49' cy='32' r='16' />
              <circle cx='25' cy='53' r='21' />
            </g>
          </svg>
        </PageButton>
      </PageIcons>

      <Section $first>
        <SectionTitle>Viewport</SectionTitle>
        <Field label='Title' value='Perspective' stepper={false} width={81} />
        <Field label='Width' value='1146' disabled />
        <Field label='Height' value='833' disabled />
        <SelectField label='Projection' value='Perspe...' height={28} />
        <SelectField label='Display mode' value='Shaded' height={26} />
        <CheckField label='Locked' />
      </Section>
      <Section>
        <SectionTitle>Camera</SectionTitle>
        <Field label='Lens Length (r' value='50.0' />
        <Field label='Rotation' value='0.0' />
        <Field label='X Location' value='296.135' />
        <Field label='Y Location' value='-300.011' />
        <Field label='Z Location' value='219.546' />
        <Field label='Distance to Ta' value='433.057' stepper={false} width={78} />
        <PlaceField />
      </Section>
      <Section>
        <SectionTitle>Target</SectionTitle>
        <Field label='X Target' value='111.409' />
        <Field label='Y Target' value='35.854' />
        <Field label='Z Target' value='18.027' />
        <PlaceField />
      </Section>
      <Section>
        <SectionTitle>Wallpaper</SectionTitle>
        <Row>
          <RowLabel htmlFor='wallpaper'>Filename</RowLabel>
          <TextInput id='wallpaper' placeholder='(none)' $width={46} />
          <PushButton type='button' $width={28} aria-label='Browse'>
            ...
          </PushButton>
        </Row>
        <CheckField label='Show' checked />
        <CheckField label='Gray' checked />
      </Section>
    </PanelBody>

    <SideBar>
      <SideTop>
        <Gear />
        <SideButton type='button' aria-label='Properties'>
          <SideArt viewBox='0 0 90 90'>
            <ColorWheel />
          </SideArt>
        </SideButton>
      </SideTop>
      <SideRest>
        {SIDE_TABS.map((tab) => (
          <SideButton key={tab.name} type='button' aria-label={tab.name}>
            <SideArt viewBox='0 0 90 90'>{tab.art}</SideArt>
          </SideButton>
        ))}
      </SideRest>
    </SideBar>
  </Properties>
);

const App = () => {
  return (
    <>
      <GlobalStyle />
      <Defs />
      <Desktop>
        <Window>
          <TitleBar>
            <Lights>
              <Light type='button' aria-label='Close' $color='#fb4b46' />
              <Light type='button' aria-label='Minimize' $color='#fdb125' />
              <Light type='button' aria-label='Zoom' $color='#29bf36' />
            </Lights>
            <WindowTitle>
              <svg width='14' height='18' viewBox='0 0 14 18' aria-hidden='true'>
                <path d='M0 1h13v16H0Z' fill='#eee' stroke='#ccc' />
                <path d='M1 2l2 1 1-2 1 3 2-2 1 5 3 1 2 3-2 3-3-1-1-2-3 1-3-3Z' fill='#2c2c2c' />
                <path d='M4 15h6' stroke='#aaa' />
              </svg>
              Origami Shelter 2.3dm
            </WindowTitle>
            <span />
          </TitleBar>

          <ToolArea>
            <Grip $column>
              <i /><i /><i /><i />
            </Grip>
            <ToolRows>
              <TabBar>
                {TABS.map((tab) => (
                  <Tab key={tab} type='button' $active={tab === "Standard"}>
                    {tab}
                  </Tab>
                ))}
                <TabGear>
                  <Gear />
                </TabGear>
              </TabBar>
              <Toolbar>
                <ToolStrip>
                  {TOOLBAR.map((tool) => (
                    <Tool key={tool.name} tool={tool} />
                  ))}
                </ToolStrip>
              </Toolbar>
            </ToolRows>
          </ToolArea>

          <Workspace>
            <LeftColumn>
              <CommandPanel>
                <Grip>
                  <i /><i /><i /><i />
                </Grip>
                <CommandInput placeholder='Command' aria-label='Command' />
                <ToolGrid>
                  {TOOLS.map((tool) => (
                    <Tool key={tool.name} tool={tool} />
                  ))}
                </ToolGrid>
              </CommandPanel>
              <OsnapPanel>
                <PanelHeader>
                  Osnap
                  <Gear />
                </PanelHeader>
                <OsnapTabs>
                  <OsnapTab />
                  <FilterTab type='button' aria-label='Selection filter'>
                    <svg width='14' height='15' viewBox='0 0 14 15' fill='#9a9da1' stroke='#2e3134' strokeWidth='2' strokeLinejoin='round'>
                      <path d='M1 1h12v3L9 8v6H5V8L1 4Z' />
                    </svg>
                  </FilterTab>
                </OsnapTabs>
                <OsnapList>
                  {OSNAPS.map((label) => (
                    <OsnapOption key={label} label={label} />
                  ))}
                </OsnapList>
                <OsnapOption label='Disable' />
              </OsnapPanel>
            </LeftColumn>

            <Center>
              <Viewport>
                <Scene />
                <ViewTitle>
                  <ViewName type='button'>Perspective</ViewName>
                  <ViewMenu type='button' aria-label='Viewport menu'>
                    <svg width='8' height='5' viewBox='0 0 8 5'>
                      <path d='M0 0h8L4 5Z' fill='#fff' />
                    </svg>
                  </ViewMenu>
                </ViewTitle>
              </Viewport>
              <ViewTabs>
                <LayoutButton type='button' aria-label='Four views' $width={36}>
                  <svg width='17' height='16' viewBox='0 0 17 16' fill='none' stroke='#8c8c8c'>
                    <path d='M.5 .5h7v6h-7ZM9.500 .5h7v6h-7ZM.5 8.500h7v7h-7ZM9.500 8.500h7v7h-7Z' />
                  </svg>
                </LayoutButton>
                <LayoutButton type='button' aria-label='Single view' $width={33}>
                  <svg width='17' height='16' viewBox='0 0 17 16' fill='none' stroke='#7ba8e6'>
                    <path d='M.5 .5h16v15h-16Z' />
                  </svg>
                </LayoutButton>
                {VIEW_TABS.map((tab) => (
                  <ViewTab key={tab} type='button' $active={tab === "Perspective"}>
                    {tab}
                  </ViewTab>
                ))}
              </ViewTabs>
            </Center>

            <PropertiesPanel />
          </Workspace>

          <History>
            <HistoryGrip>
              <i /><i />
            </HistoryGrip>
            <HistoryText>
              File successfully saved as Rhino 8 file /Users/williefineberg/Documents/Portfolio/Origami/Origami Shelter 2.3dm.
            </HistoryText>
            <ScrollTrack>
              <ScrollThumb />
            </ScrollTrack>
          </History>

          <StatusBar>
            <StatusItem type='button' aria-label='Toggle left sidebar' $width={14}>
              <PaneIcon />
            </StatusItem>
            <StatusItem type='button' aria-label='List' $width={16} $gap={6}>
              <svg width='16' height='14' viewBox='0 0 16 14' fill='none' stroke='#6b6b6b' strokeWidth='2'>
                <path d='M0 2h3M0 7h3M0 12h3M5 2h11M5 7h11M5 12h11' />
              </svg>
            </StatusItem>
            <StatusItem type='button' $width={62} $gap={12}>CPlane</StatusItem>
            <StatusItem as='span' $width={80} $gap={12}>x 110.871</StatusItem>
            <StatusItem as='span' $width={80}>y 102.950</StatusItem>
            <StatusItem as='span' $width={60} $gap={12}>z 0</StatusItem>
            <StatusItem type='button' $width={60} $gap={36}>Inches</StatusItem>
            <StatusItem type='button' $width={70} $gap={29}>
              <Swatch />
              Default
            </StatusItem>
            <StatusItem type='button' $width={62} $gap={62}>Grid Snap</StatusItem>
            <StatusItem type='button' $width={53} $gap={12} $on>Ortho</StatusItem>
            <StatusItem type='button' $width={52} $gap={6}>Planar</StatusItem>
            <StatusItem type='button' $width={57} $gap={6} $on>Osnap</StatusItem>
            <StatusItem type='button' $width={78} $gap={10}>SmartTrack</StatusItem>
            <StatusItem type='button' $width={112} $gap={15}>Gumball (CPlane)</StatusItem>
            <StatusItem type='button' $width={148} $gap={16}>
              <svg width='11' height='15' viewBox='0 0 11 15' fill='none' stroke='#8d8d8d'>
                <path d='M.5 6.500h10v8H.5ZM2.500 6V4q3-6 6 0v2' />
              </svg>
              Auto CPlane (Object)
            </StatusItem>
            <StatusItem type='button' $width={94} $gap={24}>Record History</StatusItem>
            <StatusItem type='button' $width={50} $gap={12} $on>Filter</StatusItem>
            <StatusItem as='span' $width={154} $gap={13}>Absolute tolerance: 0.001</StatusItem>
            <StatusEnd>
              <StatusItem type='button' aria-label='Toggle right sidebar' $width={14}>
                <PaneIcon />
              </StatusItem>
            </StatusEnd>
          </StatusBar>
        </Window>
      </Desktop>
    </>
  );
};

export default App;

const GlobalStyle = createGlobalStyle`
  * {
    box-sizing: border-box;
  }
  body {
    margin: 0;
    background: #fff;
    color: #2b2b2b;
    font-family: Inter, "Liberation Sans", sans-serif;
    font-size: 12px;
  }
  button, input, select {
    margin: 0;
    padding: 0;
    border: 0;
    background: none;
    color: inherit;
    font: inherit;
  }
`;

const HiddenSvg = styled.svg`
  position: absolute;
  width: 0;
  height: 0;
`;

const Desktop = styled.main`
  min-height: 100vh;
  padding: 43px 62px 84px;
  display: flex;
`;

const Window = styled.div`
  flex: 1;
  min-width: 0;
  display: flex;
  flex-direction: column;
  border: 1px solid #b0b0b2;
  border-radius: 12px;
  overflow: hidden;
  background: #d2d3d6;
  box-shadow: 0 22px 36px rgba(0, 0, 0, 0.42), 0 2px 20px rgba(0, 0, 0, 0.16);
`;

const TitleBar = styled.header`
  height: 31px;
  padding: 0 8px 2px;
  display: grid;
  grid-template-columns: 1fr auto 1fr;
  align-items: center;
  background: #fdfdfd;
  border-bottom: 1px solid #b9babd;
`;

const Lights = styled.div`
  display: flex;
  gap: 8px;
`;

const Light = styled.button`
  width: 14px;
  height: 14px;
  border-radius: 50%;
  background: ${({ $color }) => $color};
  border: 1px solid rgba(0, 0, 0, 0.12);
`;

const WindowTitle = styled.h1`
  margin: 0;
  display: flex;
  align-items: center;
  gap: 6px;
  font-size: 15px;
  font-weight: 600;
  color: #444;
`;

const ToolArea = styled.div`
  height: 53px;
  margin: 0 2px 3px 3px;
  display: flex;
`;

const Grip = styled.div`
  display: flex;
  align-items: center;
  justify-content: center;
  flex-direction: ${({ $column }) => ($column ? "column" : "row")};
  gap: 3px;
  width: ${({ $column }) => ($column ? "14px" : "auto")};
  height: ${({ $column }) => ($column ? "auto" : "15px")};
  background: #e8e8e8;
  border: 0 solid #d6d6d8;
  border-width: ${({ $column }) => ($column ? "0 1px 0 0" : "0 0 1px")};

  i {
    width: 4px;
    height: 4px;
    border: 1px solid #999;
    border-radius: 50%;
  }
`;

const ToolRows = styled.div`
  flex: 1;
  min-width: 0;
`;

const TabBar = styled.nav`
  height: 23px;
  display: flex;
`;

const Tab = styled.button`
  padding: 0 12px;
  color: ${({ $active }) => ($active ? "#1a1a1a" : "#5f6062")};
  background: ${({ $active }) => ($active ? "#e8e8e8" : "transparent")};
  border-radius: 4px 4px 0 0;
  white-space: nowrap;
`;

const TabGear = styled.div`
  margin-left: auto;
  padding: 3px 4px;
`;

const Toolbar = styled.div`
  height: 30px;
  background: #e8e8e8;
`;

const ToolStrip = styled.div`
  max-width: 1036px;
  height: 31px;
  display: grid;
  grid-template-columns: repeat(33, 1fr);
`;

const ToolButton = styled.button`
  position: relative;
  display: flex;
  align-items: center;
  justify-content: center;

  &::after {
    content: "";
    display: ${({ $menu }) => ($menu ? "block" : "none")};
    position: absolute;
    right: 0;
    bottom: 0;
    width: 5px;
    height: 5px;
    background: linear-gradient(135deg, transparent 50%, #4b4b4b 50%);
  }
`;

const ToolArt = styled.svg`
  width: 30px;
  height: 30px;
`;

const SmallIcon = styled.svg`
  display: block;
  width: 14px;
  height: 14px;
`;

const Workspace = styled.div`
  flex: 1;
  min-height: 0;
  margin: 0 2px 0 3px;
  display: flex;
  gap: 3px;
`;

const LeftColumn = styled.aside`
  width: 142px;
  display: flex;
  flex-direction: column;
  gap: 3px;
`;

const CommandPanel = styled.section`
  height: 481px;
  background: #e8e8e8;
  border-radius: 4px 4px 0 0;
  overflow: hidden;
`;

const CommandInput = styled.input`
  width: 123px;
  height: 23px;
  margin: 12px 9px 13px;
  padding: 0 5px;
  background: #fff;
  border: 1px solid #cfcfcf;
  border-bottom-color: #aaa;
  font-size: 15px;

  &::placeholder {
    color: #b5b5b5;
    opacity: 1;
  }
`;

const ToolGrid = styled.div`
  width: 126px;
  height: 315px;
  margin: 0 4px;
  display: grid;
  grid-template-columns: repeat(4, 1fr);
  grid-template-rows: repeat(10, 1fr);
`;

const OsnapPanel = styled.section`
  flex: 1;
  background: #e8e8e8;
  border-radius: 4px 4px 0 0;
`;

const PanelHeader = styled.h2`
  height: 22px;
  margin: 0;
  padding: 0 4px 0 1px;
  display: flex;
  align-items: center;
  justify-content: space-between;
  font-size: 14px;
  font-weight: 400;
  color: #858585;
  border-bottom: 1px solid ${({ $line }) => ($line ? "#d0d0d2" : "transparent")};
`;

const OsnapTabs = styled.div`
  height: 23px;
  display: flex;
  background: #d2d3d6;
`;

const OsnapTab = styled.div`
  width: 40px;
  background: #e8e8e8;
  border-radius: 0 4px 0 0;
`;

const FilterTab = styled.button`
  width: 40px;
  display: flex;
  align-items: center;
  justify-content: center;
`;

const OsnapList = styled.div`
  padding: 8px 0 18px;
`;

const OsnapLabel = styled.label`
  height: 17px;
  padding-left: 16px;
  display: flex;
  align-items: center;
  gap: 5px;
  color: #222;
`;

const Check = styled.input`
  appearance: none;
  flex: none;
  width: 13px;
  height: 13px;
  background: #fff;
  border: 1px solid #c4c4c4;
  border-radius: 3px;

  &:checked {
    border-color: #1272f5;
    background: #1272f5
      url("data:image/svg+xml,%3Csvg xmlns='http://www.w3.org/2000/svg' viewBox='0 0 12 12' fill='none' stroke='white' stroke-width='2'%3E%3Cpath d='M2 6l3 3 5-7'/%3E%3C/svg%3E")
      center / 11px no-repeat;
  }
`;

const Center = styled.section`
  flex: 1;
  min-width: 0;
  display: flex;
  flex-direction: column;
`;

const Viewport = styled.div`
  position: relative;
  flex: 1;
  min-height: 0;
  overflow: hidden;
  background: #9198a0;
`;

const SceneSvg = styled.svg`
  position: absolute;
  inset: 0;
  width: 100%;
  height: 100%;
`;

const ViewTitle = styled.div`
  position: absolute;
  top: 1px;
  left: 0;
  height: 22px;
  display: flex;
  gap: 1px;
`;

const ViewName = styled.button`
  padding: 0 5px;
  background: #08498a;
  color: #fff;
  font-size: 14px;
  font-weight: 600;
`;

const ViewMenu = styled.button`
  width: 18px;
  display: flex;
  align-items: center;
  justify-content: center;
  background: #08498a;
`;

const ViewTabs = styled.nav`
  height: 30px;
  padding: 0 0 2px 11px;
  display: flex;
  align-items: center;
  background: #ededee;
`;

const LayoutButton = styled.button`
  width: ${({ $width }) => $width}px;
  display: flex;
`;

const ViewTab = styled.button`
  height: 16px;
  padding: 0 24px 0 21px;
  display: flex;
  align-items: center;
  border-left: 1px solid #5c5c5c;
  font-size: 14px;
  color: ${({ $active }) => ($active ? "#1a6ff2" : "#7c7c7e")};
`;

const Properties = styled.aside`
  width: 237px;
  display: flex;
`;

const PanelBody = styled.div`
  flex: 1;
  min-width: 0;
  background: #e8e8e8;
  border-radius: 4px 0 0 0;
`;

const PageIcons = styled.div`
  height: 31px;
  margin-bottom: 6px;
  padding-right: 12px;
  display: flex;
  align-items: center;
  justify-content: center;
  gap: 7px;
`;

const PageButton = styled.button`
  display: flex;
`;

const Section = styled.section`
  margin: 0 13px 0 10px;
  padding: 7px 0 14px;
  border-top: ${({ $first }) => ($first ? "0" : "1px solid #c9c9cb")};
`;

const SectionTitle = styled.h3`
  height: 24px;
  margin: 0;
  font-size: 12px;
  font-weight: 400;
  line-height: 24px;
`;

const Row = styled.div`
  height: ${({ $height = 30 }) => $height}px;
  display: flex;
  align-items: center;
`;

const RowLabel = styled.label`
  width: 100px;
  margin-right: 9px;
  flex: none;
  text-align: right;
  white-space: nowrap;
`;

const TextInput = styled.input`
  width: ${({ $width }) => $width}px;
  height: 20px;
  padding: 0 3px;
  background: ${({ disabled }) => (disabled ? "#f0f0f0" : "#fff")};
  border: 1px solid #d4d4d4;
  border-bottom-color: ${({ disabled }) => (disabled ? "#d0d0d0" : "#ababab")};
  color: ${({ disabled }) => (disabled ? "#b4b4b4" : "#222")};

  &::placeholder {
    color: #b4b4b4;
    opacity: 1;
  }
`;

const StepperBox = styled.span`
  width: 13px;
  height: 20px;
  margin-left: 4px;
  display: flex;
  flex-direction: column;
  border-radius: 6px;
  background: ${({ $disabled }) => ($disabled ? "#efefef" : "#fff")};
  color: ${({ $disabled }) => ($disabled ? "#b4b4b4" : "#333")};
  box-shadow: 0 0 2px rgba(0, 0, 0, 0.35);
`;

const StepButton = styled.button`
  flex: 1;
  display: flex;
  align-items: center;
  justify-content: center;
`;

const SelectBox = styled.span`
  position: relative;
  width: 82px;
  height: 19px;
`;

const Select = styled.select`
  appearance: none;
  display: block;
  width: 100%;
  height: 100%;
  padding: 0 18px 0 7px;
  background: #fff;
  border-radius: 5px;
  box-shadow: 0 0 2px rgba(0, 0, 0, 0.35);
`;

const SelectBadge = styled.span`
  position: absolute;
  top: 3px;
  right: 2px;
  width: 14px;
  height: 14px;
  display: flex;
  align-items: center;
  justify-content: center;
  border-radius: 4px;
  background: #1272f5;
  pointer-events: none;
`;

const PushButton = styled.button`
  width: ${({ $width }) => $width}px;
  height: 19px;
  margin-left: auto;
  background: #fff;
  border-radius: 5px;
  box-shadow: 0 0 2px rgba(0, 0, 0, 0.4);
`;

const SideBar = styled.nav`
  width: 23px;
  display: flex;
  flex-direction: column;
  background: #e8e8e8;
`;

const SideTop = styled.div`
  height: 63px;
  padding-top: 4px;
  display: flex;
  flex-direction: column;
  align-items: center;
  gap: 15px;
`;

const SideRest = styled.div`
  flex: 1;
  padding-top: 10px;
  display: flex;
  flex-direction: column;
  align-items: center;
  gap: 20px;
  background: #d2d3d6;
  border-radius: 4px 0 0 0;
`;

const SideButton = styled.button`
  display: flex;
`;

const SideArt = styled.svg`
  width: 20px;
  height: 20px;
`;

const History = styled.div`
  height: 19px;
  margin: 3px 2px 0 3px;
  display: flex;
  align-items: center;
  background: #e8e8e8;
`;

const HistoryGrip = styled.div`
  width: 14px;
  height: 19px;
  display: flex;
  flex-direction: column;
  align-items: center;
  justify-content: center;
  gap: 3px;
  border-right: 1px solid #d6d6d8;

  i {
    width: 3px;
    height: 3px;
    border-radius: 50%;
    background: #a5a5a5;
  }
`;

const HistoryText = styled.p`
  flex: 1;
  margin: 0;
  padding: 0 14px;
  font-family: "Liberation Sans", sans-serif;
  font-size: 13px;
  color: #333;
`;

const ScrollTrack = styled.div`
  width: 15px;
  height: 19px;
  padding: 0 3px;
  background: #fafafa;
`;

const ScrollThumb = styled.div`
  width: 9px;
  height: 15px;
  border-radius: 0 0 5px 5px;
  background: #bcbcbc;
`;

const StatusBar = styled.footer`
  height: 28px;
  padding: 0 8px 0 9px;
  display: flex;
  align-items: center;
  background: #e8e8e8;
  color: #4a4a4a;
`;

const StatusItem = styled.button`
  flex: none;
  width: ${({ $width }) => $width}px;
  height: 21px;
  margin-left: ${({ $gap = 0 }) => $gap}px;
  display: flex;
  align-items: center;
  justify-content: center;
  gap: 8px;
  border-radius: 2px;
  background: ${({ $on }) => ($on ? "#fff" : "transparent")};
  color: ${({ $on }) => ($on ? "#000" : "inherit")};
  font-weight: ${({ $on }) => ($on ? 700 : 400)};
  white-space: nowrap;
`;

const StatusEnd = styled.div`
  margin-left: auto;
`;

const Swatch = styled.span`
  width: 18px;
  height: 18px;
  background: #000;
`;
